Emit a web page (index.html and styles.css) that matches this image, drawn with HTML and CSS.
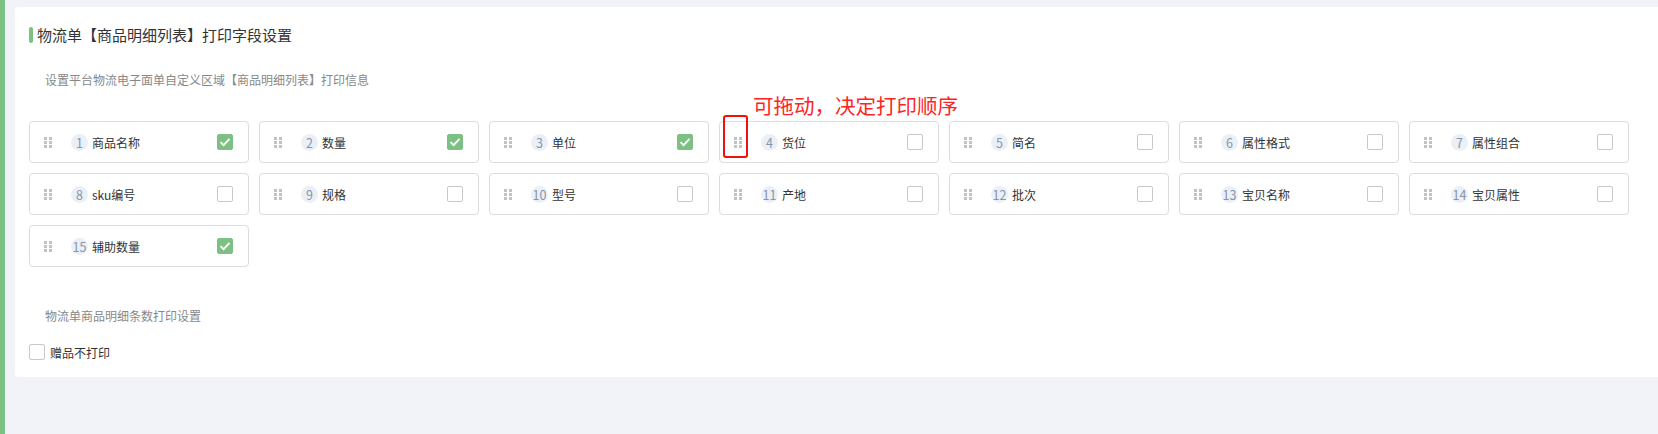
FILE: index.html
```html
<!DOCTYPE html>
<html lang="zh-CN">
<head>
<meta charset="utf-8">
<link rel="stylesheet" href="styles.css">
</head>
<body>
<div class="layout">
  <div class="side"></div>
  <div class="main">
    <div class="card">
      <div class="title"><span class="bar"></span>物流单【商品明细列表】打印字段设置</div>
      <div class="sub">设置平台物流电子面单自定义区域【商品明细列表】打印信息</div>
      <div class="grid">
        <div class="item"><span class="handle"><svg width="8" height="11" viewBox="0 0 8 11"><g fill="#c2c2c2"><rect x="0" y="0" width="3" height="3"/><rect x="5" y="0" width="3" height="3"/><rect x="0" y="4" width="3" height="3"/><rect x="5" y="4" width="3" height="3"/><rect x="0" y="8" width="3" height="3"/><rect x="5" y="8" width="3" height="3"/></g></svg></span><span class="num">1</span><span class="label">商品名称</span><span class="cb on"><svg width="12" height="10" viewBox="0 0 12 10"><path d="M1.5 5.2 L4.6 8.2 L10.5 1.8" fill="none" stroke="#fff" stroke-width="1.8"/></svg></span></div>
        <div class="item"><span class="handle"><svg width="8" height="11" viewBox="0 0 8 11"><g fill="#c2c2c2"><rect x="0" y="0" width="3" height="3"/><rect x="5" y="0" width="3" height="3"/><rect x="0" y="4" width="3" height="3"/><rect x="5" y="4" width="3" height="3"/><rect x="0" y="8" width="3" height="3"/><rect x="5" y="8" width="3" height="3"/></g></svg></span><span class="num">2</span><span class="label">数量</span><span class="cb on"><svg width="12" height="10" viewBox="0 0 12 10"><path d="M1.5 5.2 L4.6 8.2 L10.5 1.8" fill="none" stroke="#fff" stroke-width="1.8"/></svg></span></div>
        <div class="item"><span class="handle"><svg width="8" height="11" viewBox="0 0 8 11"><g fill="#c2c2c2"><rect x="0" y="0" width="3" height="3"/><rect x="5" y="0" width="3" height="3"/><rect x="0" y="4" width="3" height="3"/><rect x="5" y="4" width="3" height="3"/><rect x="0" y="8" width="3" height="3"/><rect x="5" y="8" width="3" height="3"/></g></svg></span><span class="num">3</span><span class="label">单位</span><span class="cb on"><svg width="12" height="10" viewBox="0 0 12 10"><path d="M1.5 5.2 L4.6 8.2 L10.5 1.8" fill="none" stroke="#fff" stroke-width="1.8"/></svg></span></div>
        <div class="item"><span class="handle"><svg width="8" height="11" viewBox="0 0 8 11"><g fill="#c2c2c2"><rect x="0" y="0" width="3" height="3"/><rect x="5" y="0" width="3" height="3"/><rect x="0" y="4" width="3" height="3"/><rect x="5" y="4" width="3" height="3"/><rect x="0" y="8" width="3" height="3"/><rect x="5" y="8" width="3" height="3"/></g></svg></span><span class="num">4</span><span class="label">货位</span><span class="cb"></span>
          <span class="mark"></span><span class="note">可拖动，决定打印顺序</span></div>
        <div class="item"><span class="handle"><svg width="8" height="11" viewBox="0 0 8 11"><g fill="#c2c2c2"><rect x="0" y="0" width="3" height="3"/><rect x="5" y="0" width="3" height="3"/><rect x="0" y="4" width="3" height="3"/><rect x="5" y="4" width="3" height="3"/><rect x="0" y="8" width="3" height="3"/><rect x="5" y="8" width="3" height="3"/></g></svg></span><span class="num">5</span><span class="label">简名</span><span class="cb"></span></div>
        <div class="item"><span class="handle"><svg width="8" height="11" viewBox="0 0 8 11"><g fill="#c2c2c2"><rect x="0" y="0" width="3" height="3"/><rect x="5" y="0" width="3" height="3"/><rect x="0" y="4" width="3" height="3"/><rect x="5" y="4" width="3" height="3"/><rect x="0" y="8" width="3" height="3"/><rect x="5" y="8" width="3" height="3"/></g></svg></span><span class="num">6</span><span class="label">属性格式</span><span class="cb"></span></div>
        <div class="item"><span class="handle"><svg width="8" height="11" viewBox="0 0 8 11"><g fill="#c2c2c2"><rect x="0" y="0" width="3" height="3"/><rect x="5" y="0" width="3" height="3"/><rect x="0" y="4" width="3" height="3"/><rect x="5" y="4" width="3" height="3"/><rect x="0" y="8" width="3" height="3"/><rect x="5" y="8" width="3" height="3"/></g></svg></span><span class="num">7</span><span class="label">属性组合</span><span class="cb"></span></div>
        <div class="item"><span class="handle"><svg width="8" height="11" viewBox="0 0 8 11"><g fill="#c2c2c2"><rect x="0" y="0" width="3" height="3"/><rect x="5" y="0" width="3" height="3"/><rect x="0" y="4" width="3" height="3"/><rect x="5" y="4" width="3" height="3"/><rect x="0" y="8" width="3" height="3"/><rect x="5" y="8" width="3" height="3"/></g></svg></span><span class="num">8</span><span class="label">sku编号</span><span class="cb"></span></div>
        <div class="item"><span class="handle"><svg width="8" height="11" viewBox="0 0 8 11"><g fill="#c2c2c2"><rect x="0" y="0" width="3" height="3"/><rect x="5" y="0" width="3" height="3"/><rect x="0" y="4" width="3" height="3"/><rect x="5" y="4" width="3" height="3"/><rect x="0" y="8" width="3" height="3"/><rect x="5" y="8" width="3" height="3"/></g></svg></span><span class="num">9</span><span class="label">规格</span><span class="cb"></span></div>
        <div class="item"><span class="handle"><svg width="8" height="11" viewBox="0 0 8 11"><g fill="#c2c2c2"><rect x="0" y="0" width="3" height="3"/><rect x="5" y="0" width="3" height="3"/><rect x="0" y="4" width="3" height="3"/><rect x="5" y="4" width="3" height="3"/><rect x="0" y="8" width="3" height="3"/><rect x="5" y="8" width="3" height="3"/></g></svg></span><span class="num">10</span><span class="label">型号</span><span class="cb"></span></div>
        <div class="item"><span class="handle"><svg width="8" height="11" viewBox="0 0 8 11"><g fill="#c2c2c2"><rect x="0" y="0" width="3" height="3"/><rect x="5" y="0" width="3" height="3"/><rect x="0" y="4" width="3" height="3"/><rect x="5" y="4" width="3" height="3"/><rect x="0" y="8" width="3" height="3"/><rect x="5" y="8" width="3" height="3"/></g></svg></span><span class="num">11</span><span class="label">产地</span><span class="cb"></span></div>
        <div class="item"><span class="handle"><svg width="8" height="11" viewBox="0 0 8 11"><g fill="#c2c2c2"><rect x="0" y="0" width="3" height="3"/><rect x="5" y="0" width="3" height="3"/><rect x="0" y="4" width="3" height="3"/><rect x="5" y="4" width="3" height="3"/><rect x="0" y="8" width="3" height="3"/><rect x="5" y="8" width="3" height="3"/></g></svg></span><span class="num">12</span><span class="label">批次</span><span class="cb"></span></div>
        <div class="item"><span class="handle"><svg width="8" height="11" viewBox="0 0 8 11"><g fill="#c2c2c2"><rect x="0" y="0" width="3" height="3"/><rect x="5" y="0" width="3" height="3"/><rect x="0" y="4" width="3" height="3"/><rect x="5" y="4" width="3" height="3"/><rect x="0" y="8" width="3" height="3"/><rect x="5" y="8" width="3" height="3"/></g></svg></span><span class="num">13</span><span class="label">宝贝名称</span><span class="cb"></span></div>
        <div class="item"><span class="handle"><svg width="8" height="11" viewBox="0 0 8 11"><g fill="#c2c2c2"><rect x="0" y="0" width="3" height="3"/><rect x="5" y="0" width="3" height="3"/><rect x="0" y="4" width="3" height="3"/><rect x="5" y="4" width="3" height="3"/><rect x="0" y="8" width="3" height="3"/><rect x="5" y="8" width="3" height="3"/></g></svg></span><span class="num">14</span><span class="label">宝贝属性</span><span class="cb"></span></div>
        <div class="item"><span class="handle"><svg width="8" height="11" viewBox="0 0 8 11"><g fill="#c2c2c2"><rect x="0" y="0" width="3" height="3"/><rect x="5" y="0" width="3" height="3"/><rect x="0" y="4" width="3" height="3"/><rect x="5" y="4" width="3" height="3"/><rect x="0" y="8" width="3" height="3"/><rect x="5" y="8" width="3" height="3"/></g></svg></span><span class="num">15</span><span class="label">辅助数量</span><span class="cb on"><svg width="12" height="10" viewBox="0 0 12 10"><path d="M1.5 5.2 L4.6 8.2 L10.5 1.8" fill="none" stroke="#fff" stroke-width="1.8"/></svg></span></div>
      </div>
      <div class="sub sub2">物流单商品明细条数打印设置</div>
      <label class="check-row"><span class="cb"></span><span class="check-label">赠品不打印</span></label>
    </div>
  </div>
</div>
</body>
</html>
```
FILE: styles.css
```css
* { box-sizing: border-box; }
html, body { margin: 0; padding: 0; }
body {
  background: #f2f3f8;
  font-family: "Noto Sans CJK SC", "Noto Sans", sans-serif;
  color: #333;
  width: 1658px;
  height: 434px;
  overflow: hidden;
}
.layout { display: flex; height: 434px; }
.side { width: 5px; background: #7cc084; flex: none; }
.main { flex: 1; padding: 7px 0 0 10px; }
.card {
  background: #fff;
  border-radius: 4px 0 0 4px;
  height: 370px;
  padding: 18px 14px 0 14px;
  width: calc(100% + 6px);
}
.title {
  display: flex;
  align-items: center;
  height: 20px;
  font-size: 15px;
  color: #333;
  line-height: 20px;
}
.bar {
  width: 4px; height: 16px; background: #7cc084; border-radius: 2px;
  margin-right: 4px;
}
.sub {
  margin-top: 25px;
  padding-left: 16px;
  font-size: 12px;
  line-height: 20px;
  color: #888;
}
.grid {
  margin-top: 31px;
  display: flex;
  flex-wrap: wrap;
  gap: 10px;
  width: 1600px;
}
.item {
  position: relative;
  width: 220px;
  height: 42px;
  border: 1px solid #dcdcdc;
  border-radius: 4px;
  display: flex;
  align-items: center;
  padding: 0 15px 0 14px;
}
.handle { display: flex; width: 8px; height: 11px; }
.handle svg { display: block; }
.num {
  margin-left: 19px;
  width: 17px; height: 17px;
  border-radius: 50%;
  background: #ebf0f7;
  color: #8795aa;
  font-size: 12.5px;
  line-height: 17px;
  display: flex; justify-content: center;
  flex: none;
}
.label { margin-left: 4px; font-size: 12px; color: #333; flex: 1; }
.cb {
  width: 16px; height: 16px;
  border: 1px solid #c9c9c9;
  border-radius: 2px;
  background: #fff;
  display: flex; align-items: center; justify-content: center;
  flex: none;
}
.cb.on { background: #7cc084; border-color: #7cc084; }
.cb svg { display: block; }
.mark {
  position: absolute;
  left: 3px; top: -7px;
  width: 25px; height: 43px;
  border: 2px solid #f01010;
  border-radius: 3px;
}
.note {
  position: absolute;
  left: 33px; top: -29px;
  font-size: 20.5px;
  line-height: 24px;
  color: #ff2424;
  white-space: nowrap;
}
.sub2 { margin-top: 39px; }
.check-row {
  margin-top: 18px;
  display: flex;
  align-items: center;
  height: 16px;
}
.check-label { margin-left: 5px; font-size: 12px; color: #333; }
```
